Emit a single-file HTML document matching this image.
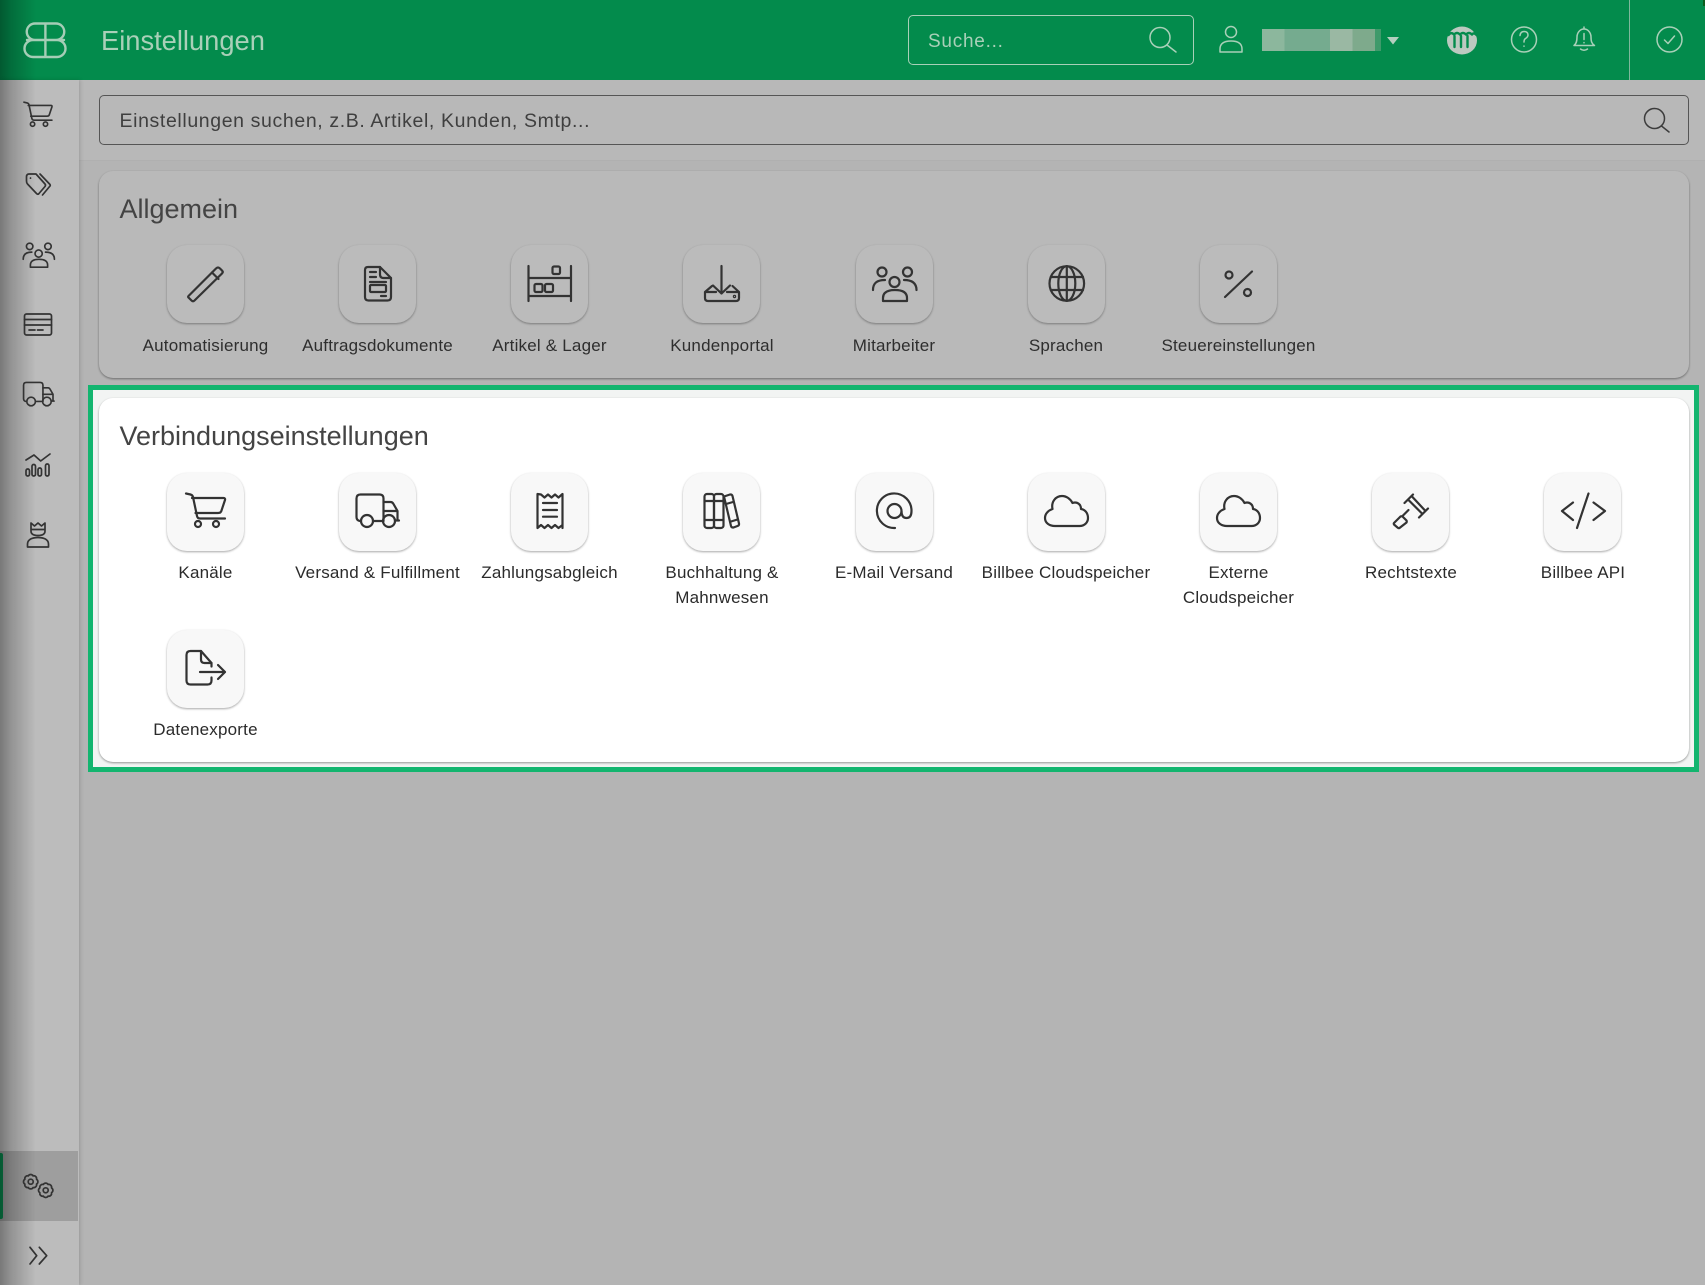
<!DOCTYPE html>
<html lang="de"><head><meta charset="utf-8"><title>Einstellungen</title>
<style>
*{box-sizing:border-box}
html,body{margin:0;padding:0}
body{width:1705px;height:1285px;overflow:hidden;background:#b4b4b4;position:relative;font-family:"Liberation Sans",sans-serif;color:#333}
.a{position:absolute}
#hdr{left:0;top:0;width:1705px;height:80px;background:#038b4c}
#side{left:0;top:80px;width:79px;height:1205px;background:#bcbcbc;box-shadow:1px 0 4px rgba(0,0,0,.16)}
#band{left:79px;top:80px;width:1626px;height:81px;background:#b8b8b8;border-bottom:1px solid #b0b0b0}
#fade{left:0;top:0;width:36px;height:1285px;background:linear-gradient(90deg,rgba(0,0,0,.36),rgba(0,0,0,.22) 30%,rgba(0,0,0,0))}
.card{left:99px;width:1590px;border-radius:14px}
.dim{background:#b9b9b9;box-shadow:0 1px 2px rgba(0,0,0,.4)}
.lit{background:#fff;box-shadow:0 1px 2px rgba(0,0,0,.4)}
.title{left:119.500px;font-size:27px;line-height:32px;color:#444;white-space:nowrap}
.t{position:absolute;width:77px;height:77.500px;border-radius:20px}
.t svg{display:block;width:78px;height:78px;fill:none;stroke:#333;stroke-width:2.200;stroke-linecap:round;stroke-linejoin:round;overflow:visible}
.t.d{background:#bbb;box-shadow:0 1px 2px rgba(0,0,0,.35)}
.t.l{background:#f8f8f8;box-shadow:0 1px 2px rgba(0,0,0,.35)}
.lb{position:absolute;width:172px;text-align:center;font-size:17px;letter-spacing:.2px;line-height:25px;color:#2e2e2e}
.d2{color:#2b2b2b}
</style></head><body>
<svg width="0" height="0" style="position:absolute">
<defs>
<symbol id="cart" viewBox="0 0 78 78"><path d="M19 20.500L23.500 21.500Q25.500 22 26 24L30 43Q30.500 45.500 33 45.500H58"/><path d="M25 25H56.500Q58.500 25 58 27L54.500 37.500Q54 40 51 40H28.500"/><circle cx="31" cy="51" r="3"/><circle cx="49" cy="51" r="3"/></symbol>
<symbol id="truck" viewBox="0 0 78 78"><path d="M22 48H21Q17.500 47.500 17.500 44V25.500Q17.500 21.500 21.500 21.500H40.500Q44.500 21.500 44.500 25.500V48H34"/><path d="M44.500 29H51.500Q53.500 29 54.500 31L58.500 38V47.500H56M44.500 38H58.500M58.500 47.500H60"/><circle cx="28" cy="48" r="6"/><circle cx="50" cy="48" r="6"/></symbol>
<symbol id="people" viewBox="0 0 78 78"><circle cx="26" cy="27" r="4.500"/><circle cx="51.500" cy="27" r="4.500"/><circle cx="38.500" cy="37" r="5"/><path d="M27 56V53Q27 45 39 45Q51 45 51 53V56Z"/><path d="M17 45C17 38 21 35 29 35M60.500 45C60.500 38 56 35 48 35"/></symbol>
<symbol id="cloud" viewBox="0 0 78 78"><path d="M27 53H51.500C56.500 53 60 49.500 60 45C60 40 57 36.500 53 36C53 31 49 28.500 44.500 30C42.500 26 38.500 23 34 23C27.500 23 23 29 24.500 36C20 37.500 17 41 17 45C17 50 21.500 53 27 53Z"/></symbol>
</defs>
</svg>

<div class="a" id="hdr"></div>
<div class="a" id="band"></div>
<div class="a" id="side"></div>
<div class="a" style="left:0;top:1151px;width:78px;height:70px;background:#9e9e9e"></div>
<div class="a" style="left:0;top:1153px;width:3px;height:66px;background:#0a8a4f;border-radius:0 2px 2px 0"></div>
<div class="a" id="fade"></div>
<div class="a" style="left:1703px;top:0;width:2px;height:6px;background:#0d5c1d"></div>
<div class="a" style="left:1629px;top:0;width:1px;height:80px;background:#7fb89b"></div>

<div class="a" style="left:101px;top:21px;font-size:27.300px;line-height:40px;color:#a9d0b8;white-space:nowrap">Einstellungen</div>
<div class="a" style="left:908px;top:15px;width:286px;height:50px;border:1px solid #a9d0b8;border-radius:5px"></div>
<div class="a" style="left:928px;top:30px;font-size:19px;line-height:24px;color:#a9d0b8;letter-spacing:.75px;white-space:nowrap">Suche...</div>
<div class="a" style="left:1262px;top:29px;width:119px;height:22px;background:linear-gradient(90deg,#8cb79d 0 19%,#75ab8f 19% 57%,#9ab8a3 57% 76%,#7eaa8c 76% 95%,#3f9a6b 95%)"></div>

<div class="a" style="left:99px;top:95px;width:1590px;height:50px;border:1px solid #555;border-radius:5px"></div>
<div class="a" style="left:119.500px;top:108.500px;font-size:19.500px;line-height:24px;color:#3f3f3f;letter-spacing:.62px;white-space:nowrap">Einstellungen suchen, z.B. Artikel, Kunden, Smtp...</div>

<div class="a card dim" style="top:171px;height:207px"></div>
<div class="a title" style="top:192.500px">Allgemein</div>

<div class="a" style="left:88px;top:385px;width:1611px;height:387px;border:5px solid #13b56f;background:#f2f4f3"></div>
<div class="a card lit" style="top:398px;height:364px"></div>
<div class="a title" style="top:419.500px">Verbindungseinstellungen</div>

<!-- Allgemein tiles -->
<div class="t d" style="left:167px;top:245px"><svg viewBox="0 0 78 78"><path d="M21.500 51L49 23.500Q51 21.500 53 23.500L55 25.500Q56.500 27 55 28.500L27.500 55.500Q26 57 24.500 55.500L22 53Q20.500 52 21.500 51Z"/><path d="M45 27.500L51.500 34"/></svg></div>
<div class="lb" style="left:119.500px;top:332.500px">Automatisierung</div>
<div class="t d" style="left:339px;top:245px"><svg viewBox="0 0 78 78"><path d="M29 22H41L52 33V52Q52 55.500 48.500 55.500H29.500Q26 55.500 26 52V25Q26 22 29 22Z"/><path d="M41 22V29.500Q41 33 44.500 33H52M31 27H37M31 32H37M31 37H47M42 51H47"/><rect x="31" y="40" width="16" height="7" rx="1"/></svg></div>
<div class="lb" style="left:291.500px;top:332.500px">Auftragsdokumente</div>
<div class="t d" style="left:511px;top:245px"><svg viewBox="0 0 78 78"><path d="M17.500 21V56M60 21V56M17.500 33H60M17.500 51H60"/><rect x="41.500" y="21.500" width="7.500" height="7.500" rx="1.500"/><rect x="23.500" y="39" width="8" height="8" rx="1.500"/><rect x="34" y="39" width="8" height="8" rx="1.500"/></svg></div>
<div class="lb" style="left:463.500px;top:332.500px">Artikel &amp; Lager</div>
<div class="t d" style="left:683px;top:245px"><svg viewBox="0 0 78 78"><path d="M38.500 21V48.500M30 40.500L38.500 48.500L47 40.500"/><path d="M29 41L22 47V53Q22 56 25 56H53Q56 56 56 53V47L49.500 41M22 47H33M44 47H56"/><circle cx="51.500" cy="51.500" r=".6"/></svg></div>
<div class="lb" style="left:636px;top:332.500px">Kundenportal</div>
<div class="t d" style="left:856px;top:245px"><svg><use href="#people"/></svg></div>
<div class="lb" style="left:808px;top:332.500px">Mitarbeiter</div>
<div class="t d" style="left:1028px;top:245px"><svg viewBox="0 0 78 78"><circle cx="38.800" cy="38.500" r="17.300"/><ellipse cx="38.800" cy="38.500" rx="8.500" ry="17.300"/><path d="M38.800 21.200V55.800M23 32H55M23 45H55"/></svg></div>
<div class="lb" style="left:980px;top:332.500px">Sprachen</div>
<div class="t d" style="left:1200px;top:245px"><svg viewBox="0 0 78 78"><path d="M25 52L52 26.500"/><circle cx="29" cy="30" r="3.500"/><circle cx="47.500" cy="47.500" r="3.500"/></svg></div>
<div class="lb" style="left:1152.500px;top:332.500px">Steuereinstellungen</div>

<!-- Verbindung tiles -->
<div class="t l" style="left:167px;top:473px"><svg><use href="#cart"/></svg></div>
<div class="lb d2" style="left:119.500px;top:560px">Kanäle</div>
<div class="t l" style="left:339px;top:473px"><svg><use href="#truck"/></svg></div>
<div class="lb d2" style="left:291.500px;top:560px">Versand &amp; Fulfillment</div>
<div class="t l" style="left:511px;top:473px"><svg viewBox="0 0 78 78"><path d="M26.500 21V55L30 52L33.500 55L37 52L40.500 55L44 52L47.500 55L51.500 52V55V21L47.500 24.500L44 21.500L40.500 24.500L37 21.500L33.500 24.500L30 21.500Z"/><path d="M32 30H46M32 37H46M32 43.700H46"/></svg></div>
<div class="lb d2" style="left:463.500px;top:560px">Zahlungsabgleich</div>
<div class="t l" style="left:683px;top:473px"><svg viewBox="0 0 78 78"><rect x="21.500" y="21" width="9.500" height="34" rx="2.500"/><rect x="31" y="21" width="9.500" height="34" rx="2.500"/><path d="M21.500 28H40.500M21.500 47H40.500"/><path d="M41 23.500L47 21.500Q49 21.200 49.500 23L56 50.500Q56.300 52.500 54.500 53L50.500 54.500Q48.500 54.800 48 53Z"/><path d="M43 31L50 29M48 48.500L54.500 46.500"/></svg></div>
<div class="lb d2" style="left:636px;top:560px">Buchhaltung &amp;<br>Mahnwesen</div>
<div class="t l" style="left:856px;top:473px"><svg viewBox="0 0 78 78"><circle cx="38.500" cy="38" r="7"/><path d="M45.500 38Q45.500 45 50.500 45Q55.500 45 55.500 38A17.300 17.300 0 1 0 39 55"/></svg></div>
<div class="lb d2" style="left:808px;top:560px">E-Mail Versand</div>
<div class="t l" style="left:1028px;top:473px"><svg><use href="#cloud"/></svg></div>
<div class="lb d2" style="left:980px;top:560px">Billbee Cloudspeicher</div>
<div class="t l" style="left:1200px;top:473px"><svg><use href="#cloud"/></svg></div>
<div class="lb d2" style="left:1152.500px;top:560px">Externe<br>Cloudspeicher</div>
<div class="t l" style="left:1372px;top:473px"><svg viewBox="0 0 78 78"><path d="M32.500 30L41 21.500M47 44.500L56 35.500M36 26.500L50.500 41M40 23.500L53.500 38"/><path d="M31 42.500L36.500 37"/><path d="M22 50L28.500 43.500Q29.500 43 30.500 43.500L34.500 47.500Q35 48.500 34.500 49.500L27.500 55Q26.500 55.500 25.500 54.500L22 51.500Q21.500 50.500 22 50Z"/></svg></div>
<div class="lb d2" style="left:1325px;top:560px">Rechtstexte</div>
<div class="t l" style="left:1544px;top:473px"><svg viewBox="0 0 78 78"><path d="M29 29.500L18 38L29 47M49.500 29.500L61 38L49.500 47M44.500 20.500L33 55"/></svg></div>
<div class="lb d2" style="left:1497px;top:560px">Billbee API</div>
<div class="t l" style="left:167px;top:630px"><svg viewBox="0 0 78 78"><path d="M44.500 36.500V33L34 21H23.500Q19.500 21 19.500 25V50.500Q19.500 54.500 23.500 54.500H40.500Q44.500 54.500 44.500 50.500V47.500"/><path d="M34 21V29.500Q34 33 37.500 33H44.500M33 42H58M51 35L58 42L51 49"/></svg></div>
<div class="lb d2" style="left:119.500px;top:717px">Datenexporte</div>

<!-- Sidebar + header icons -->
<svg class="a" style="left:0;top:0" width="1705" height="1285" viewBox="0 0 1705 1285" fill="none" stroke-linecap="round" stroke-linejoin="round">
<g stroke="#a5cdb6" stroke-width="2.400">
<path d="M45.400 23.500V57M27 40H64M45.400 23.500H35A8.200 8.200 0 0 0 35 40M45.400 23.500H56A8.200 8.200 0 0 1 56 40M45.400 57H33A8.500 8.500 0 0 1 33 40M45.400 57H57A8.500 8.500 0 0 0 57 40"/>
</g>
<g stroke="#a9d0b8" stroke-width="1.500">
<circle cx="1160" cy="37.500" r="10"/><path d="M1167 45L1176 52"/>
<circle cx="1231" cy="32" r="5.500"/><path d="M1220 52V49Q1220 41 1231 41Q1242 41 1242 49V52Z"/>
<circle cx="1524" cy="39.500" r="12.500"/>
<path d="M1520 35.500Q1520.500 31.500 1524 31.500Q1528 31.500 1528 35Q1528 37 1525.500 38.500Q1524 39.500 1524 42M1524 46V46.300"/>
<path d="M1584 27V29M1574 45.500C1576.500 43.500 1577 41 1577 37A7 8 0 0 1 1591 37C1591 41 1591.500 43.500 1594.500 45.500ZM1584 33.500V39.500M1584 42.500V42.800M1580.500 49Q1584 51.500 1587.500 49"/>
<circle cx="1669.500" cy="39.500" r="12.500"/><path d="M1664.500 40L1668 43.500L1674.500 36"/>
</g>
<path d="M1387 37H1399L1393 44.500Z" fill="#b3cfbe"/>
<ellipse cx="1462" cy="40.500" rx="15" ry="14" fill="#bcc9c0"/>
<path d="M1448.500 35Q1451 31.500 1454 34.500Q1457 31.500 1460 34.500Q1463 31.500 1466 34.500Q1469 31.500 1472 34.500Q1474 32 1476.500 35M1454.500 36V47M1461 36V47M1467.500 36V47" stroke="#038b4c" stroke-width="2.400"/>
<g stroke="#3c3c3c" stroke-width="1.500">
<circle cx="1654.500" cy="118.500" r="10"/><path d="M1661.500 126L1669 132"/>
</g>
<g stroke="#333" stroke-width="1.700">
<g fill="none" stroke-width="2.300"><svg x="10.300" y="87.500" width="56" height="56" viewBox="0 0 78 78"><use href="#cart"/></svg>
<svg x="11" y="367" width="56" height="56" viewBox="0 0 78 78"><use href="#truck"/></svg>
<svg x="11" y="227" width="56" height="56" viewBox="0 0 78 78"><use href="#people"/></svg></g>
<path d="M29 174H36L45 184Q46 185 45 186.500L39 193.500Q38 195 36.500 193.500L27.500 184Q26.500 183 26.500 181V177Q26.500 174 29 174ZM40 174L50 184.500Q50.500 185.500 50 186L42.500 195M30.500 178V178.200"/>
<rect x="24.500" y="314" width="27" height="21" rx="2"/><path d="M24.500 319.500H51.500M24.500 325H51.500M29 330H35M37.500 330H43"/>
<path d="M26 460L34 455L40.700 461L50 454"/>
<rect x="26" y="469" width="3.500" height="7" rx="1.700"/><rect x="32" y="464.500" width="3.500" height="11.500" rx="1.700"/><rect x="38" y="468" width="3.500" height="8" rx="1.700"/><rect x="45.500" y="464" width="3.500" height="12" rx="1.700"/>
<path d="M31 523L34.500 526L38 523L41.500 526L45 523V531Q45 535.500 38 535.500Q31 535.500 31 531ZM31 529.500H45M27.500 547V544C27.500 539 33 537.500 38 537.500C43 537.500 48.500 539 48.500 544V547Z"/>
<g transform="translate(30.700 1181.700)"><path d="M5.820 2.410A2.800 2.800 0 0 1 2.410 5.820A2.800 2.800 0 0 1 -2.410 5.820A2.800 2.800 0 0 1 -5.820 2.410A2.800 2.800 0 0 1 -5.820 -2.410A2.800 2.800 0 0 1 -2.410 -5.820A2.800 2.800 0 0 1 2.410 -5.820A2.800 2.800 0 0 1 5.820 -2.410A2.800 2.800 0 0 1 5.820 2.410Z"/><circle r="2.500"/></g>
<g transform="translate(45.700 1190.300)"><path d="M5.820 2.410A2.800 2.800 0 0 1 2.410 5.820A2.800 2.800 0 0 1 -2.410 5.820A2.800 2.800 0 0 1 -5.820 2.410A2.800 2.800 0 0 1 -5.820 -2.410A2.800 2.800 0 0 1 -2.410 -5.820A2.800 2.800 0 0 1 2.410 -5.820A2.800 2.800 0 0 1 5.820 -2.410A2.800 2.800 0 0 1 5.820 2.410Z"/><circle r="2.500"/></g>
<path d="M30 1247.300L36.700 1255.700L30 1264M39.300 1247.300L46.700 1255.700L39.300 1264"/>
</g>
</svg>
</body></html>
